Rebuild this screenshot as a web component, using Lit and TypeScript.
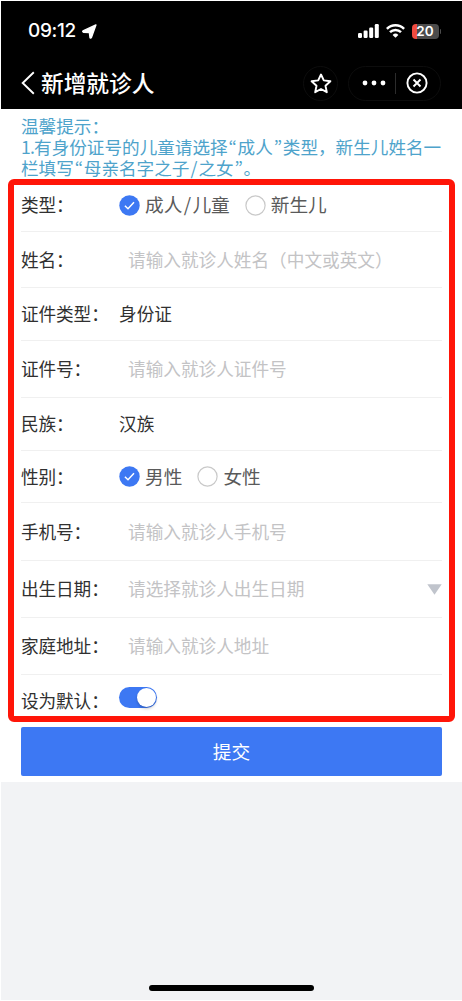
import { LitElement, html, css, svg, nothing } from "lit";
import { customElement, property } from "lit/decorators.js";
import { classMap } from "lit/directives/class-map.js";

type Row = {
  label: string;
  height: number;
  kind: "radio" | "input" | "text" | "select" | "switch";
  value?: string;
  options?: string[];
};

const rows: Row[] = [
  { label: "类型：", height: 53, kind: "radio", options: ["成人/儿童", "新生儿"] },
  { label: "姓名：", height: 56, kind: "input", value: "请输入就诊人姓名（中文或英文）" },
  { label: "证件类型：", height: 53, kind: "text", value: "身份证" },
  { label: "证件号：", height: 57, kind: "input", value: "请输入就诊人证件号" },
  { label: "民族：", height: 53, kind: "text", value: "汉族" },
  { label: "性别：", height: 52, kind: "radio", options: ["男性", "女性"] },
  { label: "手机号：", height: 58, kind: "input", value: "请输入就诊人手机号" },
  { label: "出生日期：", height: 57, kind: "select", value: "请选择就诊人出生日期" },
  { label: "家庭地址：", height: 57, kind: "input", value: "请输入就诊人地址" },
  { label: "设为默认：", height: 52, kind: "switch" },
];

@customElement("status-bar")
class StatusBar extends LitElement {
  static styles = css`
    :host { display: flex; height: 58px; align-items: center; padding: 2px 23px 0 27px; box-sizing: border-box; color: #fff; }
    .time { font: 500 19px/24px Inter, "Liberation Sans", sans-serif; letter-spacing: -0.35px; }
    .arrow { margin-left: 6px; }
    .icons { margin-left: auto; display: flex; align-items: center; }
    svg { display: block; }
    .wifi { margin-left: 7px; }
    .battery { margin-left: 7px; width: 27px; height: 15px; border-radius: 4px; background: linear-gradient(90deg, #ef4b40 5px, #4c4c4c 5px); font: 600 13.5px/15px Inter, sans-serif; text-align: center; letter-spacing: 0.1px; }
    .tip { width: 1.5px; height: 5px; background: #4c4c4c; border-radius: 0 2px 2px 0; margin-left: 1px; margin-right: -2px; }
  `;
  render() {
    return html`
      <span class="time">09:12</span>
      <svg class="arrow" width="15" height="15" viewBox="0 0 15 15"><path d="M13.9.9 9.4 13.6Q8.6 14.6 8 13.6L7.4 8.6 1.4 8.2Q.3 7.6 1 6.9Z" fill="#fff" stroke="#fff" stroke-width="1.4" stroke-linejoin="round" /></svg>
      <div class="icons">
        <svg width="21" height="14" viewBox="0 0 21 14" fill="#fff"><rect x="0" y="9" width="4" height="5" rx="1.2" /><rect x="5.6" y="6.6" width="4" height="7.4" rx="1.2" /><rect x="11.2" y="3.6" width="4" height="10.4" rx="1.2" /><rect x="16.8" y="0" width="4" height="14" rx="1.2" /></svg>
        <svg class="wifi" width="19" height="14" viewBox="0 0 19 14" fill="none" stroke="#fff" stroke-width="2.5"><path d="M.9 4.9a12.2 12.2 0 0 1 17.2 0" /><path d="M4 8.2a7.8 7.8 0 0 1 11 0" /><path d="M9.5 13.8 6.6 10.9a4.1 4.1 0 0 1 5.8 0Z" fill="#fff" stroke="none" /></svg>
        <div class="battery">20</div><div class="tip"></div>
      </div>
    `;
  }
}

@customElement("nav-bar")
class NavBar extends LitElement {
  static styles = css`
    :host { display: flex; align-items: center; height: 50px; padding: 0 21px 2px 19px; box-sizing: border-box; color: #fff; }
    svg { display: block; }
    .title { margin-left: 6px; font: 500 22.7px/30px "Noto Sans CJK SC", sans-serif; }
    .round { margin-left: auto; width: 35px; height: 35px; box-sizing: border-box; border: 1px solid #0d0d0d; border-radius: 50%; display: grid; place-items: center; }
    .capsule { margin: 0 0 0 10px; width: 93px; height: 35px; box-sizing: border-box; border: 1px solid #0d0d0d; border-radius: 18px; display: flex; align-items: center; padding-left: 13px; }
    .sep { width: 1px; height: 21px; background: #2c2c2c; margin: 0 10px 0 9px; }
  `;
  render() {
    return html`
      <svg width="15" height="24" viewBox="0 0 15 24" fill="none" stroke="#fff" stroke-width="1.9"><path d="M13.8 1.3 2.7 12 13.8 22.7" /></svg>
      <span class="title">新增就诊人</span>
      <div class="round"><svg width="22" height="21" viewBox="0 0 22 21" fill="none" stroke="#fff" stroke-width="1.9" stroke-linejoin="round"><path d="M11 1.5 13.8 7.4 20.4 8.2 15.5 12.7 16.8 19.2 11 16 5.2 19.2 6.5 12.7 1.6 8.2 8.2 7.4Z" /></svg></div>
      <div class="capsule">
        <svg width="24" height="6" viewBox="0 0 24 6" fill="#fff"><circle cx="3" cy="3" r="2.4" /><circle cx="12" cy="3" r="2.4" /><circle cx="21" cy="3" r="2.4" /></svg>
        <span class="sep"></span>
        <svg width="22" height="22" viewBox="0 0 22 22" fill="none" stroke="#fff" stroke-width="1.9"><circle cx="11" cy="11" r="9.6" /><path d="m7.5 7.5 7 7m0-7-7 7" /></svg>
      </div>
    `;
  }
}

@customElement("form-row")
class FormRow extends LitElement {
  @property({ attribute: false }) row!: Row;
  static styles = css`
    :host { display: block; }
    .row { display: flex; align-items: center; height: 100%; box-sizing: border-box; border-bottom: 1px solid #f0f0f0; font-size: 17.65px; line-height: 26px; color: #303030; white-space: nowrap; }
    .last { border-bottom: 0; }
    .label { width: 98px; flex: none; letter-spacing: -0.1px; }
    .hint { padding-left: 9px; color: #c3c3c5; flex: 1; }
    .option { display: flex; align-items: center; margin-right: 15px; }
    .option svg { margin-right: 5px; }
    .caption { font-size: 18.7px; color: #5a5a5a; padding-bottom: 2px; }
    .slash { display: inline-block; width: 10px; text-align: center; }
    svg { display: block; flex: none; }
    .switch { width: 38px; height: 21px; box-sizing: border-box; border-radius: 11px; background: #3d78f3; padding: 1px; display: flex; justify-content: flex-end; margin-bottom: 8px; }
    .knob { width: 19px; height: 19px; border-radius: 50%; background: #fff; box-shadow: 0 2px 3px #0003; }
  `;
  mark(on: boolean) {
    return html`<svg width="21" height="21" viewBox="0 0 21 21">${on
      ? svg`<circle cx="10.5" cy="10.5" r="10.2" fill="#3d78f3"/><path d="m5.9 10.7 3.1 3 6-6.4" fill="none" stroke="#fff" stroke-width="1.5"/>`
      : svg`<circle cx="10.5" cy="10.5" r="9.6" fill="#fff" stroke="#c9c9c9" stroke-width="1.2"/>`}</svg>`;
  }
  caption(text: string) {
    return text.split("/").map((part, i) => (i ? html`<span class="slash">/</span>${part}` : part));
  }
  control() {
    const r = this.row;
    switch (r.kind) {
      case "radio":
        return r.options!.map((o, i) => html`<span class="option">${this.mark(i === 0)}<span class="caption">${this.caption(o)}</span></span>`);
      case "text":
        return html`<span>${r.value}</span>`;
      case "switch":
        return html`<span class="switch"><span class="knob"></span></span>`;
      default:
        return html`<span class="hint">${r.value}</span>${r.kind === "select"
          ? html`<svg width="15" height="11" viewBox="0 0 15 11"><path d="M.3.3H14.7L7.5 10.7Z" fill="#c0c4cc" /></svg>`
          : nothing}`;
    }
  }
  render() {
    return html`<div class=${classMap({ row: true, last: this.row.kind === "switch" })}>
      <span class="label">${this.row.label}</span>${this.control()}
    </div>`;
  }
}

@customElement("app-root")
class AppRoot extends LitElement {
  static styles = css`
    :host { display: block; width: 462px; height: 1001px; box-sizing: border-box; padding: 1px 0 1px 1px; background: #fff; font-family: "Noto Sans CJK SC", sans-serif; overflow: hidden; }
    .screen { height: 999px; display: flex; flex-direction: column; background: #f2f3f5; }
    .top { background: #000; height: 108px; }
    .page { position: relative; background: #fff; height: 673px; padding: 6px 20px 0 20px; box-sizing: border-box; }
    .notice { height: 64px; color: #4ea3cb; font-size: 17.6px; line-height: 21px; white-space: nowrap; }
    .number { letter-spacing: -0.8px; }
    .quote { display: inline-block; width: 10px; text-align: center; font-family: "Noto Sans CJK KR", sans-serif; line-height: 20px; }
    .slash { display: inline-block; width: 9px; text-align: center; line-height: 20px; }
    .frame { position: absolute; left: 7px; top: 70px; width: 447px; height: 543px; box-sizing: border-box; border: 6px solid #ff1508; border-radius: 6px; pointer-events: none; }
    .submit { display: block; width: 421px; height: 49px; border: 0; border-radius: 2px; background: #3d78f3; color: #fff; font: 400 18.7px/47px "Noto Sans CJK SC", sans-serif; text-align: center; padding: 0 0 2px; }
    .home { margin: auto auto 9px; width: 165px; height: 6px; border-radius: 3px; background: #000; }
  `;
  render() {
    const open = html`<span class="quote">“</span>`;
    const close = html`<span class="quote">”</span>`;
    return html`<div class="screen">
      <div class="top"><status-bar></status-bar><nav-bar></nav-bar></div>
      <div class="page">
        <div class="notice">
          温馨提示：<br /><span class="number">1.</span>有身份证号的儿童请选择${open}成人${close}类型，新生儿姓名一<br />栏填写${open}母亲名字之子<span class="slash">/</span>之女${close}。
        </div>
        ${rows.map((r) => html`<form-row .row=${r} style="height:${r.height}px"></form-row>`)}
        <button class="submit">提交</button>
        <div class="frame"></div>
      </div>
      <div class="home"></div>
    </div>`;
  }
}
